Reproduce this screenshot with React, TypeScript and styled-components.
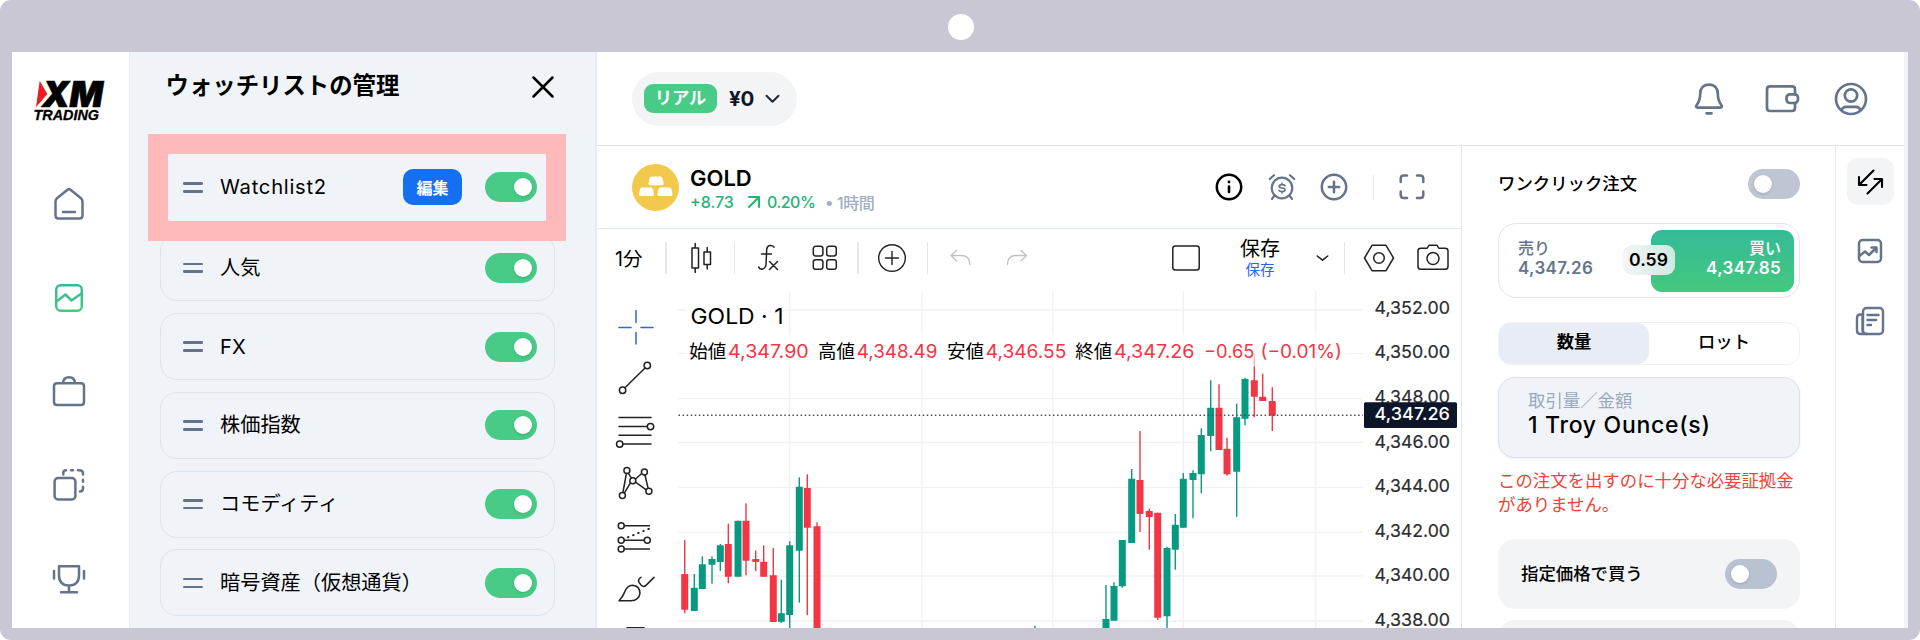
import React from "react";
import styled, { createGlobalStyle, css } from "styled-components";

const slate = "#64748b";
const line = "#e2e8f0";
const green = "#48cb87";
const up = "#089981";
const down = "#f23645";
const font = `Inter, "Noto Sans CJK JP", sans-serif`;

const Global = createGlobalStyle`
  * { box-sizing: border-box; }
  body { margin: 0; background: #fff; font-family: ${font}; color: #000; }
  svg { display: block; flex: none; overflow: visible; }
`;

const Device = styled.div`
  position: relative;
  width: 1920px;
  height: 640px;
  padding: 52px 12px 12px;
  background: #c8c7d3;
  border-radius: 11px;
  overflow: hidden;
`;

const Camera = styled.div`
  position: absolute;
  top: 14px;
  left: 948px;
  width: 26px;
  height: 26px;
  border-radius: 50%;
  background: #fff;
`;

const Screen = styled.div`
  display: flex;
  width: 1896px;
  height: 576px;
  background: #fff;
  border-right: 4px solid #f0f4f9;
  overflow: hidden;
`;

const Sidebar = styled.nav`
  flex: none;
  width: 118px;
  display: flex;
  flex-direction: column;
  align-items: center;
  padding: 27px 4px 0 0;
  border-right: 1px solid #e4eaf1;
`;

const NavList = styled.div`
  display: flex;
  flex-direction: column;
  gap: 57.6px;
  margin-top: 63.2px;
`;

const Panel = styled.section`
  position: relative;
  flex: none;
  width: 467px;
  background: #f0f4f9;
  border-right: 2px solid #e6ecf5;
  padding: 0 40px 0 30px;
`;

const PanelHead = styled.header`
  display: flex;
  align-items: center;
  justify-content: space-between;
  height: 70px;
  padding: 0 1px 0 5.5px;
  margin-bottom: 30px;
`;

const PanelTitle = styled.h1`
  margin: 0 0 1.5px;
  font-size: 23.4px;
  font-weight: 700;
  line-height: 32px;
`;

const WatchList = styled.div`
  display: flex;
  flex-direction: column;
  gap: 11.8px;
`;

const WatchRow = styled.div<{ $tall?: boolean }>`
  flex: none;
  display: flex;
  align-items: center;
  height: ${(p) => (p.$tall ? 70.5 : 67)}px;
  padding: 0 17px 0 22px;
  border: 1.5px solid #dbe3ee;
  border-radius: 17px;
`;

const Handle = styled.span`
  display: flex;
  flex-direction: column;
  justify-content: space-between;
  width: 20px;
  height: 10.5px;
  margin-right: 17px;
  &::before,
  &::after {
    content: "";
    height: 2.6px;
    border-radius: 1.3px;
    background: ${slate};
  }
`;

const RowName = styled.span<{ $spacing?: number }>`
  flex: 1;
  font-size: 20.2px;
  line-height: 30px;
  letter-spacing: ${(p) => p.$spacing ?? 0}px;
`;

const EditButton = styled.button`
  width: 59px;
  height: 36px;
  margin-right: 23px;
  padding: 0 0 1px;
  border: 0;
  border-radius: 10px;
  background: #1570ef;
  color: #fff;
  font: 700 16px ${font};
`;

const Toggle = styled.span<{ $on?: boolean; $color?: string }>`
  flex: none;
  display: flex;
  align-items: center;
  justify-content: ${(p) => (p.$on ? "flex-end" : "flex-start")};
  width: 52px;
  height: 30px;
  padding: 0 5.5px;
  border-radius: 15px;
  background: ${(p) => p.$color ?? green};
  &::after {
    content: "";
    width: 18px;
    height: 18px;
    border-radius: 50%;
    background: #fff;
    box-shadow: 0 1px 3px rgba(0, 0, 0, 0.15);
  }
`;

const Highlight = styled.div`
  position: absolute;
  left: 18px;
  top: 81.5px;
  width: 418px;
  height: 107px;
  border: 20px solid #feb9ba;
`;

const Main = styled.main`
  flex: 1;
  min-width: 0;
  display: flex;
  flex-direction: column;
`;

const TopBar = styled.header`
  flex: none;
  display: flex;
  align-items: center;
  height: 94px;
  padding: 0 35px;
  border-bottom: 1px solid #e0e4ea;
`;

const Account = styled.div`
  display: flex;
  align-items: center;
  width: 165px;
  height: 54px;
  margin-right: auto;
  padding-left: 12px;
  border-radius: 27px;
  background: #f3f4f6;
`;

const Badge = styled.span`
  width: 73px;
  height: 29px;
  border-radius: 9px;
  background: ${green};
  color: #fff;
  font-size: 17.3px;
  font-weight: 600;
  line-height: 28px;
  text-align: center;
`;

const Balance = styled.span`
  width: 36px;
  margin-left: 12px;
  font-size: 20.5px;
  font-weight: 700;
  letter-spacing: -0.3px;
  color: #0f172a;
`;

const Body = styled.div`
  flex: 1;
  min-height: 0;
  display: flex;
`;

const ChartColumn = styled.section`
  flex: none;
  width: 865px;
  border-right: 1px solid ${line};
`;

const Instrument = styled.div`
  display: flex;
  align-items: center;
  height: 83px;
  padding: 0 35px;
  border-bottom: 1px solid #dfe8f1;
`;

const InstrumentText = styled.div`
  margin-left: 11px;
  margin-right: auto;
  padding-top: 4.5px;
`;

const Symbol = styled.div`
  font-size: 22px;
  font-weight: 600;
  line-height: 26px;
`;

const Quote = styled.div`
  display: flex;
  align-items: center;
  height: 22px;
  font-size: 16px;
  font-weight: 500;
  color: #22b573;
`;

const QuoteItem = styled.span<{ $width: number; $muted?: boolean; $tight?: boolean }>`
  width: ${(p) => p.$width}px;
  white-space: nowrap;
  letter-spacing: ${(p) => (p.$tight ? -0.5 : 0)}px;
  ${(p) =>
    p.$muted &&
    css`
      color: #a0adc4;
    `}
`;

const Cluster = styled.div`
  display: flex;
  align-items: center;
`;

const Gap = styled.span<{ $w: number }>`
  flex: none;
  width: ${(p) => p.$w}px;
`;

const Divider = styled.span<{ $h?: number }>`
  flex: none;
  width: 1.5px;
  height: ${(p) => p.$h ?? 32}px;
  background: #e4e6ea;
`;

const Toolbar = styled.div`
  display: flex;
  align-items: center;
  height: 57px;
  padding-left: 18px;
`;

const Interval = styled.span`
  width: 50px;
  font-size: 19.6px;
`;

const Save = styled.div`
  width: 76px;
  padding-top: 2px;
  text-align: center;
  font-size: 20px;
  line-height: 22px;
  small {
    display: block;
    font-size: 14.5px;
    line-height: 19px;
    color: #2962ff;
  }
`;

const ChartBody = styled.div`
  display: flex;
`;

const Tools = styled.div`
  width: 81px;
  height: 342px;
  padding: 15px 0 0 18.5px;
  overflow: hidden;
`;

const OrderPanel = styled.section`
  flex: none;
  width: 374px;
  padding: 20px 35px 0 36px;
  border-right: 1px solid ${line};
  overflow: hidden;
`;

const SwitchLine = styled.div<{ $boxed?: boolean }>`
  display: flex;
  align-items: center;
  justify-content: space-between;
  height: 36px;
  font-size: 17.4px;
  font-weight: 500;
  ${(p) =>
    p.$boxed &&
    css`
      height: 70px;
      margin-bottom: 11px;
      padding: 0 23px;
      border-radius: 17px;
      background: #f3f4f6;
    `}
`;

const SwitchLabel = styled.span`
  padding-bottom: 3px;
`;

const PriceCard = styled.div`
  position: relative;
  display: flex;
  justify-content: space-between;
  height: 75px;
  margin-top: 21px;
  padding: 5.5px 5px;
  border: 1.5px solid #e0e5ee;
  border-radius: 18px;
`;

const Side = styled.div<{ $buy?: boolean }>`
  width: 143px;
  padding: 8px 14px 0;
  border-radius: 11px;
  font-size: 16px;
  font-weight: 500;
  line-height: 20.5px;
  color: ${slate};
  ${(p) =>
    p.$buy &&
    css`
      padding-right: 13px;
      color: #fff;
      text-align: right;
      background: linear-gradient(#35ba98, #43c97d);
    `}
`;

const Price = styled.div`
  font-size: 17px;
  font-weight: 600;
  letter-spacing: 0.35px;
`;

const Spread = styled.span`
  position: absolute;
  left: 123.5px;
  top: 21px;
  width: 52px;
  height: 30px;
  border-radius: 9px;
  background: linear-gradient(90deg, #f4f5f7, #cfe9e0);
  font-size: 17.6px;
  font-weight: 600;
  line-height: 29px;
  text-align: center;
`;

const Tabs = styled.div`
  display: flex;
  height: 43px;
  margin-top: 24px;
  border: 1px solid #eef1f5;
  border-radius: 13px;
`;

const Tab = styled.span<{ $active?: boolean }>`
  flex: 1;
  border-radius: 12px;
  background: ${(p) => (p.$active ? "#e8edf5" : "transparent")};
  font-size: 17.3px;
  font-weight: ${(p) => (p.$active ? 600 : 500)};
  line-height: 38px;
  text-align: center;
`;

const Amount = styled.div`
  height: 81px;
  margin-top: 12px;
  padding: 11px 29px;
  border: 1.5px solid #d8e2f0;
  border-radius: 17px;
  background: #f0f4f9;
  box-shadow: 0 1px 3px rgba(16, 24, 40, 0.08);
  font-size: 23px;
  font-weight: 500;
  letter-spacing: 0.7px;
  line-height: 25px;
  white-space: nowrap;
  small {
    display: block;
    font-size: 17.4px;
    font-weight: 400;
    letter-spacing: 0;
    line-height: 24px;
    color: #9aa8bd;
  }
`;

const Warning = styled.p`
  margin: 11px -4px 23px 0;
  font-size: 17.4px;
  line-height: 23.5px;
  color: #f04438;
`;

const Rail = styled.aside`
  flex: 1;
  display: flex;
  flex-direction: column;
  align-items: center;
  padding-top: 12px;
  gap: 22.5px;
`;

const RailButton = styled.span<{ $active?: boolean }>`
  display: flex;
  align-items: center;
  justify-content: center;
  width: 47px;
  height: 47px;
  border-radius: 11px;
  background: ${(p) => (p.$active ? "#f3f4f6" : "transparent")};
`;

type IconProps = {
  w: number;
  h: number;
  box?: string;
  color?: string;
  stroke?: number;
  children: React.ReactNode;
};

const Icon = ({ w, h, box, color = slate, stroke = 2.5, children }: IconProps) => (
  <svg
    width={w}
    height={h}
    viewBox={box ?? `0 0 ${w} ${h}`}
    fill="none"
    stroke={color}
    strokeWidth={stroke}
    strokeLinecap="round"
    strokeLinejoin="round"
  >
    {children}
  </svg>
);

const Logo = () => (
  <svg width="72" height="44" viewBox="34 79 72 44">
    <text x="43" y="106.8" fontFamily="Inter, sans-serif" fontSize="36" fontWeight="900" fontStyle="italic" textLength="61" lengthAdjust="spacingAndGlyphs" stroke="#000" strokeWidth="0.7">XM</text>
    <path d="M40.7 80.7 L48.3 94 L37 107.2 Z" fill="#ee1c25" />
    <text x="34.5" y="120.3" fontFamily='"Liberation Sans", sans-serif' fontSize="14.8" fontWeight="700" fontStyle="italic" textLength="65.5" lengthAdjust="spacingAndGlyphs" stroke="#000" strokeWidth="0.3">TRADING</text>
  </svg>
);

const navIcons = [
  <path key="home" d="M4.5 15.5 Q4.5 13.6 6 12.3 L16.5 3.7 Q18 2.5 19.5 3.7 L30 12.3 Q31.5 13.6 31.5 15.5 V29.5 Q31.5 32.5 28.5 32.5 H7.5 Q4.5 32.5 4.5 29.5 Z M12 26 H24" />,
  <g key="chart" stroke="url(#navGreen)">
    <rect x="5.2" y="5.2" width="25.6" height="25.6" rx="4.5" />
    <path d="M5.5 21.5 L14.5 14.5 L20.5 20.5 L30.5 13.5" />
  </g>,
  <path key="case" d="M6 10.2 H30 Q33 10.2 33 13.2 V29 Q33 32 30 32 H6 Q3 32 3 29 V13.2 Q3 10.2 6 10.2 Z M12.2 10 Q12.2 4.2 18 4.2 Q23.8 4.2 23.8 10" />,
  <g key="copy">
    <rect x="3.6" y="11" width="20.8" height="21.4" rx="3.5" />
    <path d="M12.3 7.5 V6 Q12.3 3.2 15 3.2 M20 3.2 H22 M27 3.2 H28.5 Q32 3.2 32 6.5 V7.5 M32 12.8 V14.8 M32 19.8 V21.5 Q32 24.4 29 24.4" />
  </g>,
  <path key="cup" d="M8 5.2 H28 V14 Q28 24.5 18 24.5 Q8 24.5 8 14 Z M18 24.5 V31 M10 31.2 H26 M3 10 V17.5 M33 10 V17.5" />,
];

const lists = ["人気", "FX", "株価指数", "コモディティ", "暗号資産（仮想通貨）"];

const toolIcons = [
  <path key="cross" stroke="#2962ff" d="M619 327 H631 M641 327 H653 M636 310 V322 M636 332 V343.5" />,
  <path key="line" d="M624.7 388 L645.3 367.8 M625.8 390.2 a3.2 3.2 0 1 1 -6.4 0 a3.2 3.2 0 1 1 6.4 0 M650.5 365.5 a3.2 3.2 0 1 1 -6.4 0 a3.2 3.2 0 1 1 6.4 0" />,
  <path key="fib" d="M619 417 H651 M619 426 H647 M619 434.7 H651 M623 443.5 H651 M653.7 426 a3.2 3.2 0 1 1 -6.4 0 a3.2 3.2 0 1 1 6.4 0 M622.9 443.5 a3.2 3.2 0 1 1 -6.4 0 a3.2 3.2 0 1 1 6.4 0" />,
  <g key="pattern">
    <path d="M626.4 473.3 L623 491.8 M628.3 473.2 L631.5 478 M635.6 478.8 L641.7 473.3 M645 474.8 L648 487.8 M635.8 482.2 L645.6 489.2 M630.3 483 L624.6 492.5" />
    {[[626.9, 470.3], [644.4, 471.7], [632.8, 480.6], [648.9, 491], [622.4, 495.2]].map(([x, y]) => (
      <circle key={x} cx={x} cy={y} r="3" />
    ))}
  </g>,
  <g key="forecast">
    <path d="M624.5 525 H649.5 M624.5 539.5 H644 M624.5 548.3 H649.5" />
    <path strokeDasharray="0.5 5" strokeWidth="2" d="M628 536.5 L649 528" />
    {[[621.2, 525], [621.2, 539.5], [647.3, 539.5], [621.2, 548.3]].map(([x, y]) => (
      <circle key={x + y} cx={x} cy={y} r="3" />
    ))}
  </g>,
  <path key="brush" d="M619 600.4 Q622.5 597 624.5 592 Q627 584.8 632.5 584.8 Q640 585.5 640 593 Q639 600 631 600.4 Z M641 577 Q637.5 579 639 582 Q641 585.5 643.5 586 Q645 586 646 585 L654 577" />,
  <path key="text" d="M627 627.8 H644" />,
];

type Candle = [x: number, high: number, top: number, bottom: number, low: number, rising: boolean];

const candles: Candle[] = [
  [684.7, 540, 574, 609.7, 613.3, false],
  [694.3, 574, 587.7, 611, 611, true],
  [702.3, 556.3, 564.3, 589, 589, true],
  [712, 556.3, 559, 564.7, 583.7, true],
  [720.3, 544, 545.3, 562, 571, true],
  [728.3, 523.7, 544, 576.7, 583.3, false],
  [738, 520.7, 520.7, 576.7, 576.7, true],
  [746, 503.3, 520.7, 560.7, 575.3, false],
  [755.7, 550.7, 559, 562, 571, false],
  [763.7, 545.3, 561.7, 576.7, 576.7, false],
  [773.3, 548, 575.3, 622, 622, false],
  [781.3, 579.7, 613.3, 621.7, 623, true],
  [789.7, 541.3, 545.3, 615, 640, true],
  [799.3, 477.3, 486.7, 550.7, 602.7, true],
  [807.3, 474.3, 488, 527.7, 615, false],
  [817, 522.3, 526.3, 640, 640, false],
  [1035, 625.7, 632, 640, 640, true],
  [1106, 585, 619, 640, 640, true],
  [1114, 582.3, 586, 620.7, 620.7, true],
  [1122.3, 540, 540, 586.3, 587.7, true],
  [1131.7, 469, 478.7, 543, 543, true],
  [1140, 431, 480, 514, 532, false],
  [1149.3, 508.7, 511, 517, 549.7, false],
  [1157.7, 512.7, 512.7, 617.7, 620, false],
  [1167, 546.7, 548, 616.3, 640, true],
  [1175.3, 514, 524.7, 549.7, 569.7, true],
  [1183.3, 473, 478.7, 527.7, 527.7, true],
  [1193, 470.3, 473, 480, 518.3, true],
  [1201.3, 428.3, 435, 474.3, 493.3, true],
  [1210.7, 380.3, 407.7, 436, 451.3, true],
  [1219, 384.3, 407.7, 450, 450, false],
  [1227, 437.7, 448.7, 474.3, 475.7, false],
  [1236.7, 403.7, 417.3, 471.7, 516.7, true],
  [1245, 377.7, 379, 418.7, 425.3, true],
  [1254.3, 356, 380.3, 396.7, 417.3, false],
  [1262.7, 373.7, 396.7, 401, 401, false],
  [1272.3, 387.3, 401, 415.7, 431, false],
];

const legend: [string, string, number][] = [
  ["始値", "4,347.90", 689.3],
  ["高値", "4,348.49", 818],
  ["安値", "4,346.55", 947],
  ["終値", "4,347.26", 1075.2],
];

const PriceChart = () => (
  <svg width="783" height="342" viewBox="678 286 783 342" fontFamily={font}>
    <g stroke="#f1f1f3" strokeWidth="1.3">
      {[310, 353.7, 398.7, 442.5, 487.3, 532.3, 576, 621].map((y) => (
        <path key={y} d={`M678 ${y} H1363`} />
      ))}
      {[789.7, 922, 1052.7, 1183.3, 1315.7].map((x) => (
        <path key={x} d={`M${x} 291 V628`} />
      ))}
    </g>
    {candles.map(([x, high, top, bottom, low, rising]) => (
      <g key={x} fill={rising ? up : down}>
        <rect x={x - 0.7} y={high} width="1.4" height={low - high} />
        <rect x={x - 3.5} y={top} width="7" height={bottom - top} rx="0.4" />
      </g>
    ))}
    <path d="M678.5 415.3 H1363" stroke="#4a4e59" strokeWidth="1.4" strokeDasharray="1.5 2.57" />
    <rect x="686" y="296" width="99" height="36" fill="#fff" fillOpacity="0.7" />
    <rect x="686" y="334" width="662" height="32.5" fill="#fff" fillOpacity="0.6" />
    <text x="690.5" y="323.5" fontSize="22" textLength="93" lengthAdjust="spacingAndGlyphs">GOLD · 1</text>
    {legend.map(([label, value, x]) => (
      <g key={label} fontSize="18.5">
        <text x={x} y="357.7">{label}</text>
        <text x={x + 38.7} y="357.7" fill={down} textLength="80.7" lengthAdjust="spacingAndGlyphs">{value}</text>
      </g>
    ))}
    <text x="1204" y="357.7" fontSize="18.5" fill={down} textLength="50.5" lengthAdjust="spacingAndGlyphs">−0.65</text>
    <text x="1260.5" y="357.7" fontSize="18.5" fill={down} textLength="81.5" lengthAdjust="spacingAndGlyphs">(−0.01%)</text>
    <g fontSize="17.5" fill="#2b2d33" stroke="#2b2d33" strokeWidth="0.2">
      {[352, 350, 348, 346, 344, 342, 340, 338].map((p, i) => (
        <text key={p} x="1374.5" y={313.8 + i * 44.6} textLength="75.5" lengthAdjust="spacingAndGlyphs">{`4,${p}.00`}</text>
      ))}
    </g>
    <rect x="1364" y="402.3" width="93" height="25.7" rx="1.5" fill="#0d1628" />
    <text x="1374.5" y="420.3" fontSize="17.5" fontWeight="500" fill="#fff" textLength="75.5" lengthAdjust="spacingAndGlyphs">4,347.26</text>
  </svg>
);

export default function App() {
  return (
    <Device>
      <Global />
      <Camera />
      <Screen>
        <Sidebar>
          <Logo />
          <NavList>
            {navIcons.map((icon, i) => (
              <Icon key={i} w={36} h={36}>
                <defs>
                  <linearGradient id="navGreen" gradientUnits="userSpaceOnUse" x1="0" y1="4" x2="0" y2="32">
                    <stop stopColor="#35ba98" />
                    <stop offset="1" stopColor="#45ca7b" />
                  </linearGradient>
                </defs>
                {icon}
              </Icon>
            ))}
          </NavList>
        </Sidebar>

        <Panel>
          <PanelHead>
            <PanelTitle>ウォッチリストの管理</PanelTitle>
            <Icon w={22} h={22} color="#000" stroke={2.5}>
              <path d="M1.5 1.5 L20.5 20.5 M20.5 1.5 L1.5 20.5" />
            </Icon>
          </PanelHead>
          <Highlight />
          <WatchList>
            <WatchRow $tall>
              <Handle />
              <RowName $spacing={0.75}>Watchlist2</RowName>
              <EditButton>編集</EditButton>
              <Toggle $on />
            </WatchRow>
            {lists.map((name) => (
              <WatchRow key={name}>
                <Handle />
                <RowName>{name}</RowName>
                <Toggle $on />
              </WatchRow>
            ))}
            <WatchRow />
          </WatchList>
        </Panel>

        <Main>
          <TopBar>
            <Account>
              <Badge>リアル</Badge>
              <Balance>¥0</Balance>
              <Icon w={15} h={10} color="#1e293b" stroke={2}>
                <path d="M1.5 1.8 L7.5 7.8 L13.5 1.8" />
              </Icon>
            </Account>
            <Cluster>
              <Icon w={36} h={36} stroke={2.7}>
                <path d="M18 3.7 C12.3 3.7 9.2 7.5 9.2 12.7 C9.2 18.5 7.8 21.3 5.6 24.2 Q4.3 26.4 6.5 26.6 H29.5 Q31.7 26.4 30.4 24.2 C28.2 21.3 26.8 18.5 26.8 12.7 C26.8 7.5 23.7 3.7 18 3.7 Z M15.5 32.3 H20.5" />
              </Icon>
              <Gap $w={37} />
              <Icon w={36} h={36} stroke={2.7}>
                <path d="M31 13 V8.5 Q31 5.4 28 5.4 H6 Q3 5.4 3 8.4 V27 Q3 30 6 30 H28 Q31 30 31 26.7 V22" />
                <rect x="22.5" y="13.3" width="11.5" height="8.7" rx="3.5" />
              </Icon>
              <Gap $w={33} />
              <Icon w={36} h={36} stroke={2.7}>
                <circle cx="18" cy="18" r="15" />
                <circle cx="18" cy="14.5" r="6.2" />
                <path d="M8.5 29 Q10 25.8 13 25.8 H23 Q26 25.8 27.5 29" />
              </Icon>
            </Cluster>
          </TopBar>

          <Body>
            <ChartColumn>
              <Instrument>
                <svg width="47" height="47" viewBox="0 0 47 47">
                  <circle cx="23.5" cy="23.5" r="23.5" fill="#f2c94c" />
                  <path fill="#fff" d="M19.5 12.5 H28.5 Q30 12.5 30.4 14 L31.7 19.5 Q31.8 21.3 30 21.3 H18 Q16.2 21.3 16.5 19.5 L17.6 14 Q18 12.5 19.5 12.5 Z M10 23.5 H19 Q20.5 23.5 20.9 25 L22 30 Q22.2 32 20.5 32 H8.5 Q6.8 32 7 30 L8.1 25 Q8.5 23.5 10 23.5 Z M28.5 23.5 H37.5 Q39 23.5 39.4 25 L40.5 30 Q40.7 32 39 32 H27 Q25.2 32 25.5 30 L26.6 25 Q27 23.5 28.5 23.5 Z" />
                </svg>
                <InstrumentText>
                  <Symbol>GOLD</Symbol>
                  <Quote>
                    <QuoteItem $width={57}>+8.73</QuoteItem>
                    <Icon w={14} h={14} color="#22b573" stroke={2}>
                      <path d="M2 2 H12 V12 M12 2 L2 12" />
                    </Icon>
                    <Gap $w={6} />
                    <QuoteItem $width={58} $tight>0.20%</QuoteItem>
                    <QuoteItem $width={12} $muted>•</QuoteItem>
                    <QuoteItem $width={40} $muted $tight>1時間</QuoteItem>
                  </Quote>
                </InstrumentText>
                <Cluster>
                  <Icon w={28} h={28} color="#000">
                    <circle cx="14" cy="14" r="12.2" />
                    <path d="M14 13.5 V19" strokeWidth="2.6" />
                    <path d="M14 8.8 V9" strokeWidth="2.8" />
                  </Icon>
                  <Gap $w={25.5} />
                  <Icon w={28} h={28} stroke={2.2}>
                    <circle cx="14" cy="15" r="10.3" />
                    <path d="M1.8 6 L6 2.2 M26.2 6 L22 2.2 M6.5 22.5 L4 25.8 M21.5 22.5 L24 25.8" />
                    <path strokeWidth="1.7" d="M17 12.6 Q16.5 11.6 14 11.6 Q11.2 11.6 11.2 13.3 Q11.2 14.8 14 15 Q17 15.2 17 16.9 Q17 18.5 14 18.5 Q11.5 18.5 11 17.4 M14 10.3 V11.5 M14 18.6 V19.8" />
                  </Icon>
                  <Gap $w={23.5} />
                  <Icon w={28} h={28}>
                    <circle cx="14" cy="14" r="12.2" />
                    <path d="M8.8 14 H19.2 M14 8.8 V19.2" />
                  </Icon>
                  <Gap $w={25} />
                  <Divider $h={25} />
                  <Gap $w={24} />
                  <Icon w={28} h={28}>
                    <path d="M2.7 9 V5.5 Q2.7 2.5 5.7 2.5 H9 M19 2.5 H22.3 Q25.3 2.5 25.3 5.5 V9 M25.3 18.5 V22 Q25.3 25 22.3 25 H19 M9 25 H5.7 Q2.7 25 2.7 22 V18.5" />
                  </Icon>
                </Cluster>
              </Instrument>

              <Toolbar>
                <Interval>1分</Interval>
                <Divider />
                <Gap $w={23} />
                <Icon w={24} h={30} color="#222" stroke={1.5}>
                  <path d="M2 5 H8.5 V25 H2 Z M5.2 0.5 V5 M5.2 25 V29.5 M14 9 H20.5 V21.5 H14 Z M17.2 4.5 V9 M17.2 21.5 V26" />
                </Icon>
                <Gap $w={20} />
                <Divider />
                <Gap $w={22} />
                <Icon w={24} h={28} color="#222" stroke={1.5}>
                  <path d="M17 3.2 Q15.5 1 12.5 1.5 Q10.2 2 9.7 5.5 L9 20.5 Q8.5 24.5 5 25.2 Q2.5 25.2 1.8 23 M4.5 10 H14.5 M12.5 17.5 L20.5 25.5 M20.5 17.5 L12.5 25.5" />
                </Icon>
                <Gap $w={31} />
                <Icon w={26} h={26} color="#222" stroke={1.5}>
                  {[[1.3, 1.3], [14.7, 1.3], [1.3, 14.7], [14.7, 14.7]].map(([x, y]) => (
                    <rect key={`${x}-${y}`} x={x} y={y} width="9.6" height="9.6" rx="2.3" />
                  ))}
                </Icon>
                <Gap $w={19} />
                <Divider />
                <Gap $w={18} />
                <Icon w={30} h={30} color="#222" stroke={1.4}>
                  <circle cx="15" cy="15" r="13.3" />
                  <path d="M8.5 15 H21.5 M15 8.5 V21.5" />
                </Icon>
                <Gap $w={20} />
                <Divider />
                <Gap $w={21.5} />
                <Icon w={22} h={18} color="#c1c2c5" stroke={1.4}>
                  <path d="M6.5 1.5 L1 6.5 L6.5 12 M1 6.5 H12 Q19.8 7 19.8 15.5" />
                </Icon>
                <Gap $w={34} />
                <Icon w={22} h={18} color="#c1c2c5" stroke={1.4}>
                  <path d="M15 1.5 L20.5 6.5 L15 12 M20.5 6.5 H9 Q1.5 7 1.5 15.5" />
                </Icon>
                <Gap $w={144.5} />
                <Icon w={28} h={26} color="#222" stroke={1.5}>
                  <rect x="0.8" y="1" width="26.4" height="24" rx="2.5" />
                </Icon>
                <Gap $w={22} />
                <Save>
                  保存<small>保存</small>
                </Save>
                <Gap $w={18} />
                <Icon w={13} h={8} color="#222" stroke={1.6}>
                  <path d="M1.3 2 L6.5 6.2 L11.7 2" />
                </Icon>
                <Gap $w={14.5} />
                <Divider />
                <Gap $w={18} />
                <Icon w={32} h={28} color="#222" stroke={1.5}>
                  <path d="M9 1.3 H23 L30.5 14 L23 26.7 H9 L1.5 14 Z" />
                  <circle cx="16" cy="14" r="5.3" />
                </Icon>
                <Gap $w={22} />
                <Icon w={32} h={27} color="#222" stroke={1.5}>
                  <path d="M4 4.3 H10 L12 1.3 H20 L22 4.3 H28 Q31 4.3 31 7 V22.5 Q31 25.3 28 25.3 H4 Q1 25.3 1 22.5 V7 Q1 4.3 4 4.3 Z" />
                  <circle cx="16" cy="14.5" r="6" />
                </Icon>
              </Toolbar>

              <ChartBody>
                <Tools>
                  {toolIcons.map((icon, i) => (
                    <Icon key={i} w={40} h={52.4} box={`616 ${300.6 + i * 52.4} 40 52.4`} color="#222" stroke={1.5}>
                      {icon}
                    </Icon>
                  ))}
                </Tools>
                <PriceChart />
              </ChartBody>
            </ChartColumn>

            <OrderPanel>
              <SwitchLine>
                <SwitchLabel>ワンクリック注文</SwitchLabel>
                <Toggle $color="#bec6d4" />
              </SwitchLine>
              <PriceCard>
                <Side>
                  売り
                  <Price>4,347.26</Price>
                </Side>
                <Side $buy>
                  買い
                  <Price>4,347.85</Price>
                </Side>
                <Spread>0.59</Spread>
              </PriceCard>
              <Tabs>
                <Tab $active>数量</Tab>
                <Tab>ロット</Tab>
              </Tabs>
              <Amount>
                <small>取引量／金額</small>1 Troy Ounce(s)
              </Amount>
              <Warning>この注文を出すのに十分な必要証拠金がありません。</Warning>
              <SwitchLine $boxed>
                <SwitchLabel>指定価格で買う</SwitchLabel>
                <Toggle $color="#b8c2d0" />
              </SwitchLine>
              <SwitchLine $boxed />
            </OrderPanel>

            <Rail>
              <RailButton $active>
                <Icon w={28} h={28} color="#000" stroke={2.1}>
                  <path d="M17.5 2.5 L3 17 M3 9 V17 H10.5 M11.5 25.5 L26 11 M18.5 11 H26 V19" />
                </Icon>
              </RailButton>
              <RailButton>
                <Icon w={28} h={28} stroke={2.5}>
                  <rect x="3" y="3" width="22" height="22" rx="3.5" />
                  <path d="M4 18.5 L9 14.5 L13 18 L20 11 M15.5 10.5 H20.5 V15" />
                </Icon>
              </RailButton>
              <RailButton>
                <Icon w={30} h={30} stroke={2.4}>
                  <rect x="8" y="2" width="20" height="26" rx="3.5" />
                  <path d="M8 8.5 H5.5 Q2 8.5 2 12 V24.5 Q2 28 5.5 28 H12 M7.5 9 V24 Q7.5 28 11 28 M12.5 9 H23.5 M12.5 14 H21 M12.5 19 H16" />
                </Icon>
              </RailButton>
            </Rail>
          </Body>
        </Main>
      </Screen>
    </Device>
  );
}
